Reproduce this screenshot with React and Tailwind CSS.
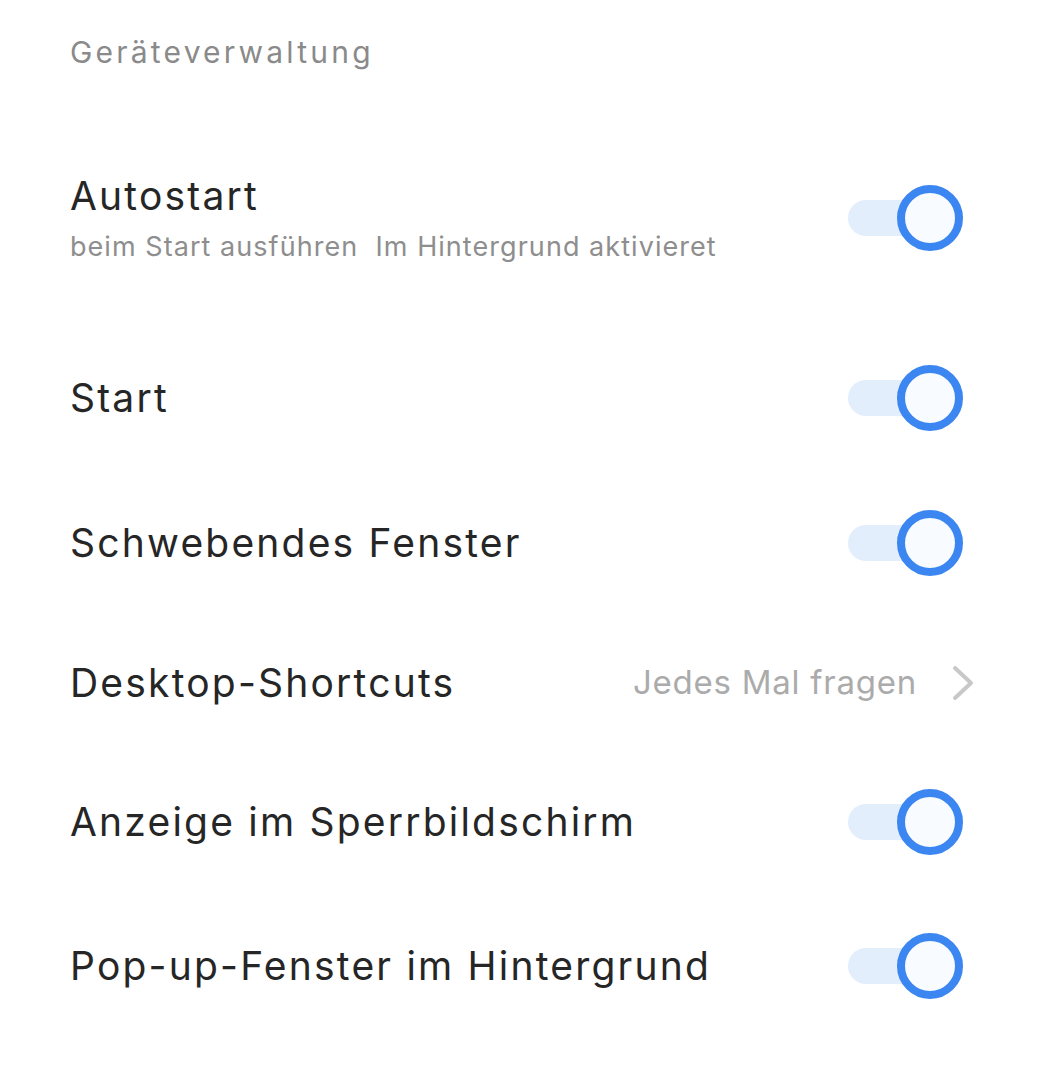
import { useState } from 'react'

const rows = [
  { id: 'autostart', title: 'Autostart', sub: 'beim Start ausführen\u00a0\u00a0Im Hintergrund aktivieret', h: 'h-[208px]', on: true },
  { id: 'start', title: 'Start', h: 'h-[152px]', on: true },
  { id: 'float', title: 'Schwebendes Fenster', h: 'h-[138px]', on: true },
  { id: 'shortcut', title: 'Desktop-Shortcuts', value: 'Jedes Mal fragen', h: 'h-[142px]' },
  { id: 'lock', title: 'Anzeige im Sperrbildschirm', h: 'h-[136px]', on: true },
  { id: 'popup', title: 'Pop-up-Fenster im Hintergrund', h: 'h-[152px]', on: true },
]

export default function App() {
  const [state, setState] = useState(() =>
    Object.fromEntries(rows.map(r => [r.id, !!r.on]))
  )

  return (
    <div className="w-[1046px] min-h-[1080px] bg-white font-['Inter','Roboto',sans-serif]">
      <div className="h-[114px] pl-[70px] pt-[32px]">
        <p className="text-[30px] leading-[40px] tracking-[3.2px] text-[#8a8a8a]">Geräteverwaltung</p>
      </div>

      {rows.map(row => (
        <div key={row.id} className={`${row.h} flex items-center pl-[70px] pr-[71px]`}>
          <div className="flex-1 min-w-0">
            <p className="text-[39px] leading-[48px] tracking-[2.2px] text-[#262626]">{row.title}</p>
            {row.sub && (
              <p className="text-[27px] leading-[34px] tracking-[1.05px] text-[#8e8e8e] mt-[10px]">{row.sub}</p>
            )}
          </div>

          {row.value ? (
            <div className="flex items-center">
              <span className="text-[33px] tracking-[0.75px] text-[#ababab] mr-[34px]">{row.value}</span>
              <svg width="24" height="36" viewBox="0 0 24 36" fill="none">
                <path d="M4 3 L20 18 L4 33" stroke="#c8c8c8" strokeWidth="4" strokeLinecap="round" strokeLinejoin="round" />
              </svg>
            </div>
          ) : (
            <Toggle
              on={state[row.id]}
              onChange={() => setState(s => ({ ...s, [row.id]: !s[row.id] }))}
            />
          )}
        </div>
      ))}
    </div>
  )
}

function Toggle({ on, onChange }) {
  return (
    <button onClick={onChange} className="relative w-[115px] h-[66px] mr-[12px] flex items-center">
      <span className={`block w-[90px] h-[36px] rounded-full ${on ? 'bg-[#e3eefc]' : 'bg-[#ececec]'}`} />
      <span
        className={`absolute top-0 ${on ? 'right-0 border-[#3b86f1]' : 'left-0 border-[#d0d0d0]'} w-[66px] h-[66px] rounded-full border-[8px] bg-[#f8fbff]`}
      />
    </button>
  )
}
